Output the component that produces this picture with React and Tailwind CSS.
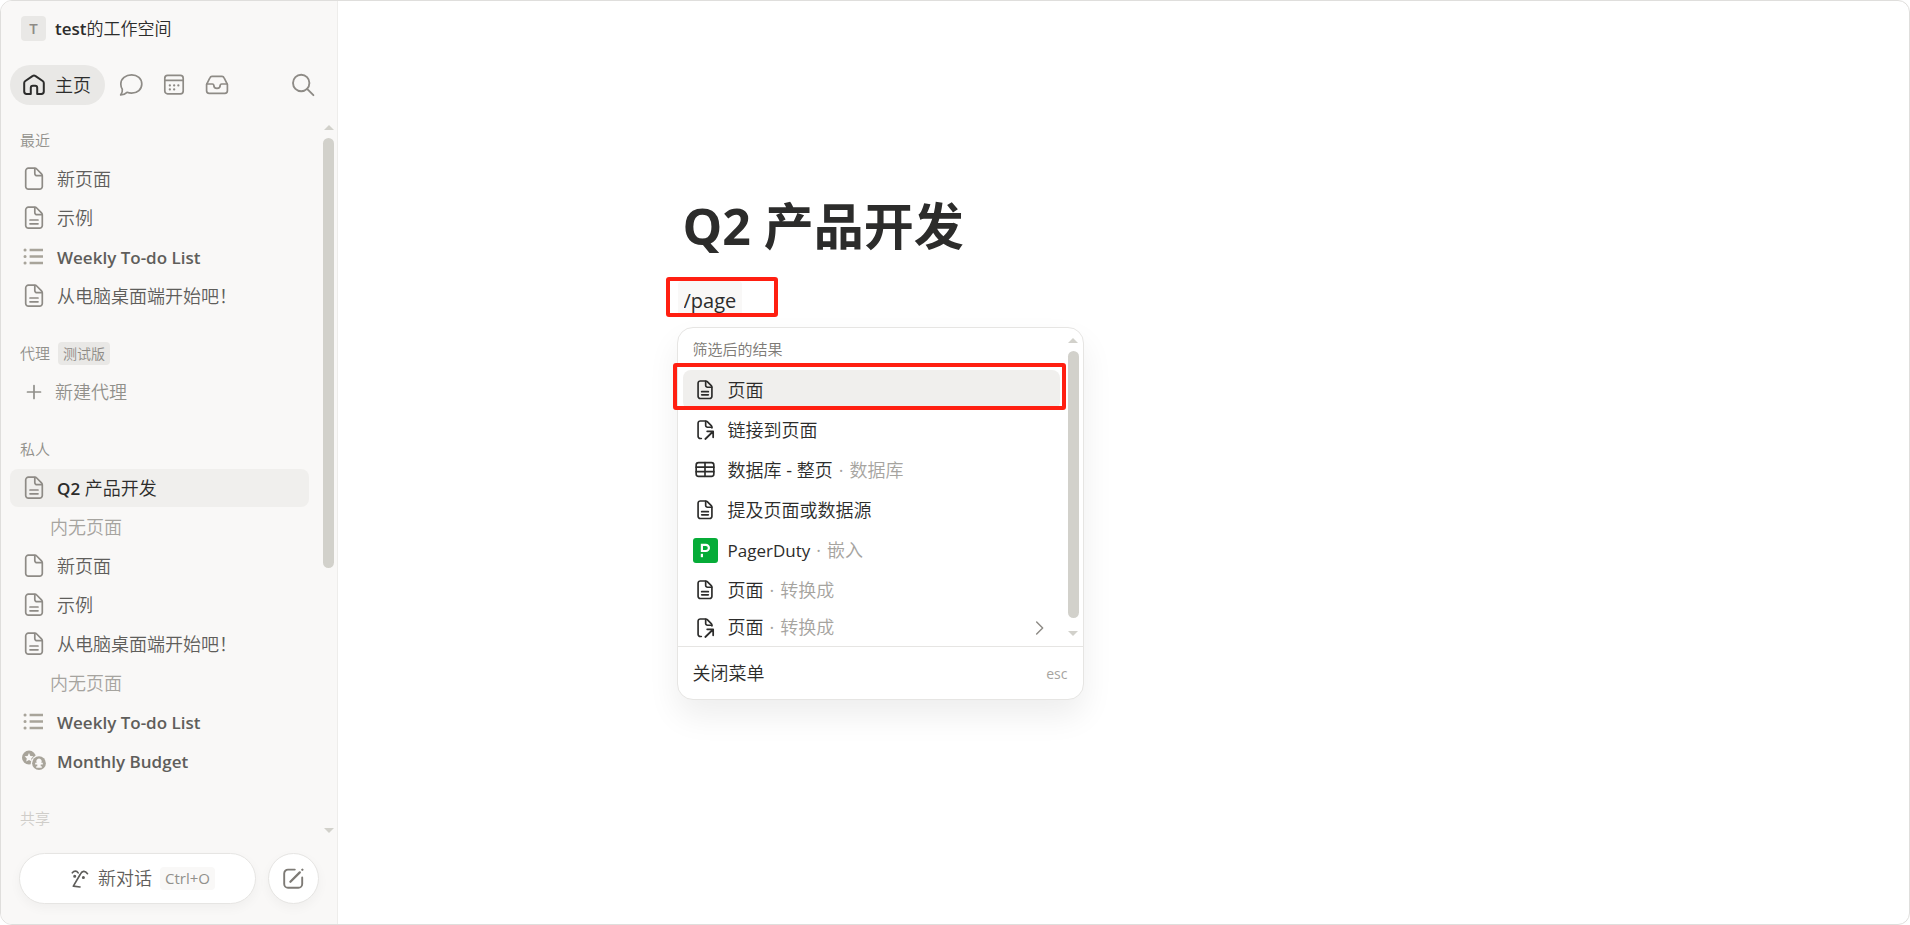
import { useState } from 'react';
import clsx from 'clsx';

const RECENT = [
  { id: 'r1', icon: 'blank', label: '新页面' },
  { id: 'r2', icon: 'page', label: '示例' },
  { id: 'r3', icon: 'list', latin: 'Weekly To-do List' },
  { id: 'r4', icon: 'page', label: '从电脑桌面端开始吧！' },
];

const PRIVATE = [
  { id: 'p1', icon: 'page', latin: 'Q2', label: '产品开发', active: true, empty: true },
  { id: 'p2', icon: 'blank', label: '新页面' },
  { id: 'p3', icon: 'page', label: '示例' },
  { id: 'p4', icon: 'page', label: '从电脑桌面端开始吧！', empty: true },
  { id: 'p5', icon: 'list', latin: 'Weekly To-do List' },
  { id: 'p6', icon: 'coins', latin: 'Monthly Budget' },
];

const COMMANDS = [
  { id: 'c1', icon: 'page', label: '页面' },
  { id: 'c2', icon: 'link', label: '链接到页面' },
  { id: 'c3', icon: 'table', label: '数据库 - 整页', hint: '数据库' },
  { id: 'c4', icon: 'page', label: '提及页面或数据源' },
  { id: 'c5', icon: 'pagerduty', latin: 'PagerDuty', hint: '嵌入' },
  { id: 'c6', icon: 'page', label: '页面', hint: '转换成' },
  { id: 'c7', icon: 'link', label: '页面', hint: '转换成', submenu: true },
];

function Svg({ size = 24, width = 1.7, className, children }) {
  return (
    <svg
      width={size}
      height={size}
      viewBox="0 0 24 24"
      fill="none"
      stroke="currentColor"
      strokeWidth={width}
      strokeLinecap="round"
      strokeLinejoin="round"
      className={clsx('shrink-0', className)}
      aria-hidden="true"
    >
      {children}
    </svg>
  );
}

function PageIcon({ lines = true, ...props }) {
  return (
    <Svg {...props}>
      <path d="M6.4 1.2H12.8C13.5 1.2 14.2 1.5 14.7 2L19.5 6.8C20 7.3 20.3 8 20.3 8.7V19.5A2.7 2.7 0 0 1 17.6 22.2H6.4A2.7 2.7 0 0 1 3.7 19.5V3.9A2.7 2.7 0 0 1 6.4 1.2Z" />
      <path d="M12.8 1.5V6.5A2.2 2.2 0 0 0 15 8.7H20" />
      {lines && <path d="M8 14H16M8 17.8H16" />}
    </Svg>
  );
}

function ItemIcon({ name }) {
  if (name === 'blank') return <PageIcon lines={false} className="text-[#8e8b86]" />;
  if (name === 'page') return <PageIcon className="text-[#8e8b86]" />;
  if (name === 'list') {
    return (
      <Svg width={2.2} className="text-[#a8a49a]">
        <path d="M7.6 5H21M7.6 11.5H21M7.6 18H21" strokeLinecap="butt" strokeWidth="2.4" />
        <path d="M3 5H3.1M3 11.5H3.1M3 18H3.1" strokeWidth="3" />
      </Svg>
    );
  }
  return (
    <svg width="24" height="24" viewBox="0 0 24 24" className="shrink-0" aria-hidden="true">
      <circle cx="7" cy="8.6" r="7" fill="#a8a49a" />
      <path d="M7 4L8.4 6.9L11.4 7.3L9.2 9.5L9.8 12.6L7 11.1L4.2 12.6L4.8 9.5L2.6 7.3L5.6 6.9Z" fill="#f9f8f7" />
      <circle cx="17" cy="14.2" r="8.2" fill="#f9f8f7" />
      <circle cx="17" cy="14.2" r="6.9" fill="#a8a49a" />
      <path
        d="M17 9.6A2.7 2.7 0 0 1 19.2 13.8H20.8V15.6H18.7V17.2H19.8V18.7H14.2V17.2H15.3V15.6H13.2V13.8H14.8A2.7 2.7 0 0 1 17 9.6Z"
        fill="#f9f8f7"
      />
    </svg>
  );
}

function CommandIcon({ name }) {
  if (name === 'page') return <PageIcon size={20} width={2} />;
  if (name === 'link') {
    return (
      <Svg size={20} width={2}>
        <path d="M7.6 22.2H6.4A2.7 2.7 0 0 1 3.7 19.5V3.9A2.7 2.7 0 0 1 6.4 1.2H12.8C13.5 1.2 14.2 1.5 14.7 2L19.5 6.8C20 7.3 20.3 8 20.3 8.7V9.6" />
        <path d="M12.8 1.5V6.5A2.2 2.2 0 0 0 15 8.7H20" />
        <path d="M12.4 22.8L21.6 13.8M14.6 13.6H21.8V20.8" strokeWidth="2.1" />
      </Svg>
    );
  }
  if (name === 'table') {
    return (
      <Svg size={20} width={2}>
        <rect x="1.4" y="3.2" width="21.2" height="16.4" rx="2.8" />
        <path d="M1.4 8.6H22.6M1.4 14H22.6M12 3.2V19.6" />
      </Svg>
    );
  }
  return (
    <span className="flex size-[25px] items-center justify-center rounded-[3px] bg-[#06ac38]">
      <svg width="25" height="25" viewBox="0 0 25 25" aria-hidden="true">
        <rect x="7.8" y="15.8" width="2.2" height="3.4" fill="#fff" />
        <path d="M8.9 14V6.8H12.8A3.1 3.1 0 0 1 12.8 13H8.9" fill="none" stroke="#fff" strokeWidth="2.2" />
      </svg>
    </span>
  );
}

function Scrollbar({ thumb }) {
  return (
    <div className="flex h-full w-[11px] shrink-0 flex-col items-center gap-2" aria-hidden="true">
      <svg width="10" height="5" viewBox="0 0 10 5" className="shrink-0">
        <path d="M0 5L5 0L10 5Z" fill="#d2d1cb" />
      </svg>
      <div className="min-h-0 w-full flex-1">
        <div className={clsx('w-full rounded-full bg-[#d2d1cb]', thumb)} />
      </div>
      <svg width="10" height="5" viewBox="0 0 10 5" className="shrink-0">
        <path d="M0 0L5 5L10 0Z" fill="#d2d1cb" />
      </svg>
    </div>
  );
}

function NavButton({ label, children }) {
  return (
    <button type="button" aria-label={label} className="flex size-[35px] items-center justify-center text-[#8e8b86]">
      {children}
    </button>
  );
}

function Heading({ children, className }) {
  return (
    <h2 className={clsx('flex h-[38px] items-center gap-2 pl-[10px] text-[15px]', className || 'text-[#91908b]')}>
      {children}
    </h2>
  );
}

function SidebarItem({ item }) {
  return (
    <>
      <a
        href="#"
        className={clsx(
          'flex h-[38px] items-center gap-[11px] rounded-lg pl-3 text-[18px]',
          item.active ? 'bg-[#f0efed] text-[#2c2c2b]' : 'text-[#5f5e5b]'
        )}
      >
        <ItemIcon name={item.icon} />
        <span>
          {item.latin && <span className="text-[17px] font-semibold">{item.latin}</span>}
          {item.latin && item.label && ' '}
          {item.label}
        </span>
      </a>
      {item.empty && <div className="flex h-[38px] items-center pl-10 text-[18px] text-[#a6a49f]">内无页面</div>}
    </>
  );
}

function Sidebar() {
  return (
    <aside className="flex w-[337px] shrink-0 flex-col border-r border-[#eeedeb] bg-[#f9f8f7]">
      <button type="button" className="flex h-[55px] items-center gap-[9px] pl-5 text-[17px] text-[#2c2c2b]">
        <span className="flex size-[25px] items-center justify-center rounded bg-[#e9e8e6] text-[15px] font-semibold text-[#8e8b86]">T</span>
        <span><span className="font-semibold">test</span>的工作空间</span>
      </button>

      <nav className="mt-[9px] flex h-10 items-center gap-2 pr-[17px] pl-[9px]">
        <button type="button" className="flex h-10 items-center gap-[9px] rounded-full bg-[#e9e8e6] pr-[14px] pl-3 text-[18px] text-[#2c2c2b]">
          <Svg width={2}>
            <path d="M2.2 10C2.2 9.2 2.6 8.5 3.3 8L10.8 2.9C11.5 2.4 12.5 2.4 13.2 2.9L20.7 8C21.4 8.5 21.8 9.2 21.8 10V18.6A2.4 2.4 0 0 1 19.4 21H15.2V14.8A2 2 0 0 0 13.2 12.8H10.8A2 2 0 0 0 8.8 14.8V21H4.6A2.4 2.4 0 0 1 2.2 18.6Z" />
          </Svg>
          主页
        </button>
        <NavButton label="聊天">
          <Svg>
            <path d="M12.6 1.8C18.4 1.8 22.8 5.8 22.8 11C22.8 16.2 18.4 20.2 12.6 20.2C10.8 20.2 9.4 19.9 8 19.3C6.4 20.9 4.3 21.9 1.7 21.9C3 20.4 3.6 18.4 3.3 16.2C2.3 14.7 1.8 12.9 1.8 11C1.8 5.8 6.8 1.8 12.6 1.8Z" />
          </Svg>
        </NavButton>
        <NavButton label="日历">
          <Svg>
            <rect x="2.8" y="2.4" width="18.4" height="18.4" rx="2.8" />
            <path d="M2.8 7.4H21.2" />
            <path d="M12.1 12.4H12.2M16.3 12.4H16.4M7.8 12.4H7.9M7.8 16.4H7.9M12.1 16.4H12.2" strokeWidth="2.2" />
          </Svg>
        </NavButton>
        <NavButton label="收件箱">
          <Svg>
            <path d="M1.6 11.4L4.9 4.8A2.4 2.4 0 0 1 7 3.4H17A2.4 2.4 0 0 1 19.1 4.8L22.4 11.4V17.8A2.6 2.6 0 0 1 19.8 20.4H4.2A2.6 2.6 0 0 1 1.6 17.8Z" />
            <path d="M1.8 11H7.4A1.4 1.4 0 0 1 8.8 12.2A3.2 3.2 0 0 0 15.2 12.2A1.4 1.4 0 0 1 16.6 11H22.2" />
          </Svg>
        </NavButton>
        <div className="flex-1" />
        <NavButton label="搜索">
          <Svg width={1.9}>
            <circle cx="10.2" cy="10" r="8.2" />
            <path d="M16.1 15.9L22.4 22.2" />
          </Svg>
        </NavButton>
      </nav>

      <div className="mt-4 flex min-h-0 flex-1 pr-[3px] pl-[9px]">
        <div className="flex min-w-0 flex-1 flex-col gap-[19px] overflow-hidden pr-[14px]">
          <section className="flex flex-col gap-px">
            <Heading>最近</Heading>
            {RECENT.map((item) => <SidebarItem key={item.id} item={item} />)}
          </section>
          <section className="flex flex-col gap-px">
            <Heading>
              代理
              <span className="rounded bg-[#e9e8e6] px-[5px] text-[14px] leading-[23px] text-[#8e8b86]">测试版</span>
            </Heading>
            <button type="button" className="flex h-[38px] items-center gap-[9px] pl-3 text-[18px] text-[#91908b]">
              <Svg>
                <path d="M12 5.5V18.5M5.5 12H18.5" />
              </Svg>
              新建代理
            </button>
          </section>
          <section className="flex flex-col gap-px">
            <Heading>私人</Heading>
            {PRIVATE.map((item) => <SidebarItem key={item.id} item={item} />)}
          </section>
          <section>
            <Heading className="text-[#cfcdc9]">共享</Heading>
          </section>
        </div>
        <div className="py-1">
          <Scrollbar thumb="h-[63%]" />
        </div>
      </div>

      <div className="flex items-center gap-3 pt-4 pr-[18px] pb-5 pl-[18px]">
        <button
          type="button"
          className="flex h-[51px] flex-1 items-center justify-center gap-2 rounded-full border border-[#e6e5e3] bg-white pl-[10px] text-[18px] text-[#5f5e5b] shadow-[0_4px_12px_rgba(0,0,0,0.04)]"
        >
          <Svg size={20} width={2}>
            <path d="M2.8 4.6C5 1.8 8 1.8 9.8 4.6M21 5.6C18 1.4 14.4 2 12.2 6.6L4 20.6L12 21.6" />
            <path d="M5.6 8.6H5.7M16 10.2H16.1" strokeWidth="3.6" />
          </Svg>
          <span>新对话</span>
          <kbd className="rounded bg-[#f9f8f7] px-[5px] font-[inherit] text-[15px] leading-[23px] text-[#91908b]">Ctrl+O</kbd>
        </button>
        <button
          type="button"
          aria-label="新建页面"
          className="flex size-[51px] items-center justify-center rounded-full border border-[#e6e5e3] bg-white text-[#7d7a75] shadow-[0_4px_12px_rgba(0,0,0,0.04)]"
        >
          <Svg width={1.9}>
            <path d="M12.8 2.6H6A3.8 3.8 0 0 0 2.2 6.4V17A3.8 3.8 0 0 0 6 20.8H16.4A3.8 3.8 0 0 0 20.2 17V10.4" />
            <path d="M8.4 14.8L17.8 5.4M20.3 2.8L20.4 2.7" strokeWidth="2.3" />
          </Svg>
        </button>
      </div>
    </aside>
  );
}

function SlashMenu() {
  return (
    <div className="absolute top-full left-0 mt-[10px] -ml-px w-[407px] overflow-hidden rounded-2xl border border-[#e6e5e3] bg-white shadow-[0_16px_32px_rgba(0,0,0,0.07)]">
      <div className="flex h-[318px]">
        <div className="min-w-0 flex-1 overflow-hidden pr-2 pl-[5px]">
          <div className="flex h-[42px] items-center pl-[10px] text-[15px] text-[#7d7a75]">筛选后的结果</div>
          <ul>
            {COMMANDS.map((cmd, i) => (
              <li key={cmd.id}>
                <button
                  type="button"
                  className={clsx(
                    'flex w-full items-center gap-[10px] rounded-lg pl-[10px] text-left text-[18px] text-[#2c2c2b]',
                    i === 0 && 'bg-[#f0efed]',
                    cmd.submenu ? 'h-[35px]' : 'h-10'
                  )}
                >
                  <span className="flex w-[25px] justify-center"><CommandIcon name={cmd.icon} /></span>
                  <span>
                    {cmd.latin && <span className="text-[17px]">{cmd.latin}</span>}
                    {cmd.label}
                    {cmd.hint && <span className="text-[#a6a49f]"><span className="mx-[6px]">·</span>{cmd.hint}</span>}
                  </span>
                  {cmd.submenu && (
                    <Svg size={16} width={2.2} className="mr-3 ml-auto text-[#8e8b86]">
                      <path d="M7 3L16 12L7 21" />
                    </Svg>
                  )}
                </button>
              </li>
            ))}
          </ul>
        </div>
        <div className="pt-[10px] pr-1 pb-[10px]">
          <Scrollbar thumb="h-[98%]" />
        </div>
      </div>
      <button type="button" className="flex h-[53px] w-full items-center justify-between border-t border-[#e6e5e3] px-[15px] text-[18px] text-[#2c2c2b]">
        关闭菜单
        <span className="text-[14px] text-[#a6a49f]">esc</span>
      </button>
    </div>
  );
}

export default function App() {
  const [text, setText] = useState('/page');

  return (
    <div className="flex h-screen overflow-hidden rounded-xl border border-[#dfdedc] bg-white font-['Open_Sans','Noto_Sans_CJK_SC_DemiLight','Noto_Sans_CJK_SC_Light','Noto_Sans_CJK_SC',sans-serif]">
      <Sidebar />
      <main className="min-w-0 flex-1 px-12 pt-[190px]">
        <div className="mx-auto max-w-[892px]">
          <h1 className="px-[5px] font-['Open_Sans','Noto_Sans_CJK_SC',sans-serif] text-[50px] leading-[70px] font-bold text-[#2c2c2b]">Q2 产品开发</h1>
          <div className="relative mt-5 w-fit">
            <input
              type="text"
              aria-label="命令"
              value={text}
              onChange={(e) => setText(e.target.value)}
              className="block h-9 w-16 rounded bg-[#f9f8f7] px-[6px] pt-[2px] text-[20px] text-[#2c2c2b] outline-none"
            />
            <div className="absolute -top-1 -left-3 h-10 w-28 rounded-[3px] border-4 border-[#ff1f11]" />
            <SlashMenu />
            <div className="absolute top-[82px] -left-[5px] h-[47px] w-[393px] rounded-[3px] border-4 border-[#ff1f11]" />
          </div>
        </div>
      </main>
    </div>
  );
}
